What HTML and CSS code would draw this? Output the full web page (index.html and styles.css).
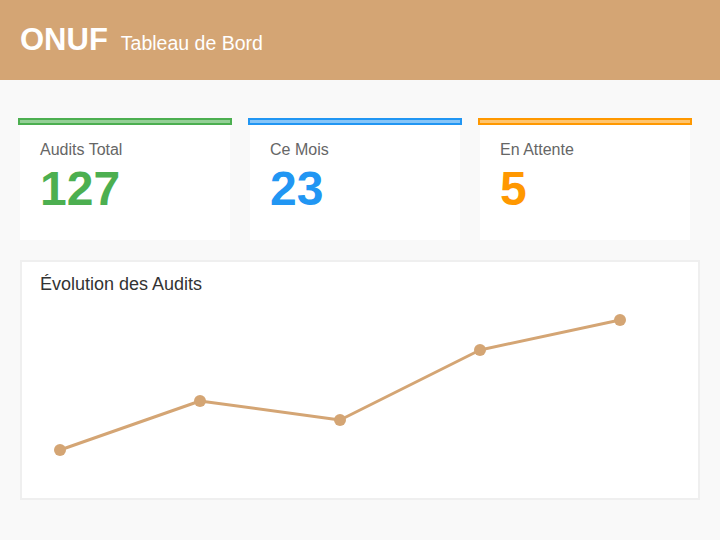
FILE: index.html
```html
<!DOCTYPE html>
<html lang="fr">
<head>
<meta charset="utf-8">
<title>ONUF Tableau de Bord</title>
<link rel="stylesheet" href="styles.css">
</head>
<body>
<header class="topbar">
  <span class="brand">ONUF</span>
  <span class="subtitle">Tableau de Bord</span>
</header>
<main class="main">
  <section class="stats">
    <div class="stat stat-green">
      <div class="stat-bar"></div>
      <div class="stat-body">
        <div class="stat-label">Audits Total</div>
        <div class="stat-value">127</div>
      </div>
    </div>
    <div class="stat stat-blue">
      <div class="stat-bar"></div>
      <div class="stat-body">
        <div class="stat-label">Ce Mois</div>
        <div class="stat-value">23</div>
      </div>
    </div>
    <div class="stat stat-orange">
      <div class="stat-bar"></div>
      <div class="stat-body">
        <div class="stat-label">En Attente</div>
        <div class="stat-value">5</div>
      </div>
    </div>
  </section>
  <section class="chart-card">
    <h2 class="chart-title">Évolution des Audits</h2>
    <svg class="chart" width="640" height="190" viewBox="0 0 640 190">
      <polyline points="20,149 160,100 300,119 440,49 580,19" fill="none" stroke="#d4a574" stroke-width="3" stroke-linejoin="round"/>
      <circle cx="20" cy="149" r="6" fill="#d4a574"/>
      <circle cx="160" cy="100" r="6" fill="#d4a574"/>
      <circle cx="300" cy="119" r="6" fill="#d4a574"/>
      <circle cx="440" cy="49" r="6" fill="#d4a574"/>
      <circle cx="580" cy="19" r="6" fill="#d4a574"/>
    </svg>
  </section>
</main>
</body>
</html>
```
FILE: styles.css
```css
* { box-sizing: border-box; }
html, body { margin: 0; padding: 0; }
body {
  background: #f9f9f9;
  font-family: "Liberation Sans", Arial, sans-serif;
  width: 720px;
  height: 540px;
  overflow: hidden;
}
.topbar {
  height: 80px;
  background: #d4a574;
  display: flex;
  align-items: baseline;
  padding: 22px 20px 0 20px;
  gap: 13px;
  color: #fff;
}
.brand {
  font-size: 31px;
  font-weight: bold;
}
.subtitle {
  font-size: 19.5px;
}
.main {
  padding: 38px 20px 0 20px;
}
.stats {
  display: flex;
  gap: 20px;
}
.stat {
  width: 210px;
  display: flex;
  flex-direction: column;
}
.stat-bar {
  height: 7px;
  margin: 0 -2px;
  border: 2px solid;
}
.stat-body {
  background: #fff;
  height: 115px;
  padding: 16px 20px 0 20px;
}
.stat-label {
  font-size: 16px;
  color: #666;
  line-height: 18px;
}
.stat-value {
  font-size: 48px;
  font-weight: bold;
  line-height: 55px;
  margin-top: 2px;
}
.stat-green .stat-bar { border-color: #4caf50; background: #94d096; }
.stat-green .stat-value { color: #4caf50; }
.stat-blue .stat-bar { border-color: #2196f3; background: #86c5f8; }
.stat-blue .stat-value { color: #2196f3; }
.stat-orange .stat-bar { border-color: #ff9800; background: #ffc56e; }
.stat-orange .stat-value { color: #ff9800; }
.chart-card {
  margin-top: 20px;
  width: 680px;
  height: 240px;
  background: #fff;
  border: 2px solid #efefef;
  padding: 12px 18px 7px 18px;
}
.chart-title {
  margin: 0 0 6px 0;
  font-size: 18px;
  font-weight: normal;
  line-height: 21px;
  color: #333;
}
.chart {
  display: block;
}
```
